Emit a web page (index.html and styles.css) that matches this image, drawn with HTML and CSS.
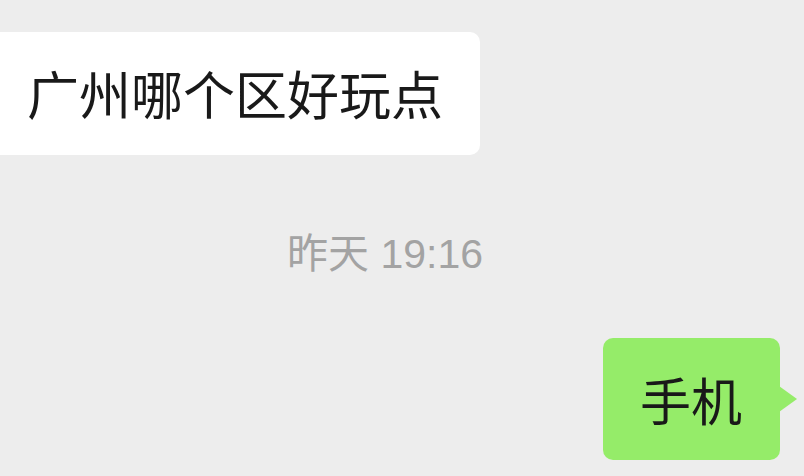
FILE: index.html
```html
<!DOCTYPE html>
<html lang="zh">
<head>
<meta charset="utf-8">
<link rel="stylesheet" href="styles.css">
</head>
<body>
<div class="chat">
  <div class="row row-left">
    <div class="bubble bubble-in">广州哪个区好玩点</div>
  </div>
  <div class="time">昨天 19:16</div>
  <div class="row row-right">
    <div class="bubble bubble-out">手机<span class="tail"></span></div>
  </div>
</div>
</body>
</html>
```
FILE: styles.css
```css
html, body {
  margin: 0;
  padding: 0;
  background: #ededed;
  width: 804px;
  height: 476px;
  overflow: hidden;
}
.chat {
  font-family: "Noto Sans CJK SC", "Noto Sans", sans-serif;
  padding-top: 32px;
  display: flex;
  flex-direction: column;
}
.row {
  display: flex;
}
.row-left {
  justify-content: flex-start;
}
.row-right {
  justify-content: flex-end;
  padding-right: 24px;
}
.bubble {
  color: #191919;
  border-radius: 10px;
  position: relative;
}
.bubble-in {
  font-size: 52px;
  line-height: 62px;
  background: #ffffff;
  margin-left: -20px;
  padding: 30px 37px 31px 47px;
}
.bubble-out {
  font-size: 51px;
  line-height: 62px;
  background: #95ec69;
  padding: 30px 38px 30px 37px;
}
.tail {
  position: absolute;
  right: -17px;
  top: 48px;
  width: 0;
  height: 0;
  border-top: 13px solid transparent;
  border-bottom: 13px solid transparent;
  border-left: 18px solid #95ec69;
}
.time {
  font-family: "Liberation Sans", "Noto Sans CJK SC", sans-serif;
  font-size: 41px;
  line-height: 46px;
  color: #a3a3a3;
  margin: 76px 0 61px 287px;
}
```
